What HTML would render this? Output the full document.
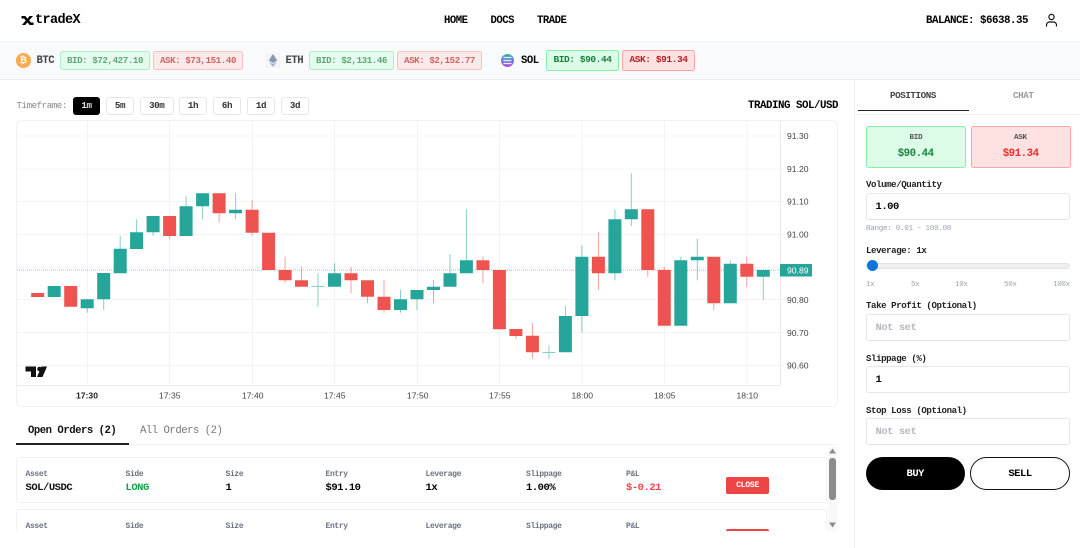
<!DOCTYPE html>
<html><head><meta charset="utf-8"><style>
html,body{margin:0;padding:0;width:1080px;height:548px;overflow:hidden;background:#fff}
body{position:relative;font-family:"Liberation Mono",monospace;color:#000}
.t{position:absolute;white-space:nowrap;line-height:20px;height:20px;margin-top:1px}
.t,.pill,.tf,.ls{letter-spacing:-.0444em}
.b{font-weight:700}
.box{position:absolute;box-sizing:border-box}
.bid{background:#dcfce7;border:1px solid #86efac;border-radius:2.5px;color:#15803d}
.ask{background:#fee2e2;border:1px solid #fca5a5;border-radius:2.5px;color:#b91c1c}
.pill{position:absolute;box-sizing:border-box;font-weight:700;white-space:nowrap;text-align:center}
.tf{position:absolute;top:97px;height:17.5px;box-sizing:border-box;border:1px solid #e5e7eb;border-radius:3px;font-size:9.2px;font-weight:700;line-height:16.5px;text-align:center;color:#333;background:#fff}
.lb{font-size:9.07px;font-weight:700;color:#222}
.in{position:absolute;left:866px;width:204px;height:27px;box-sizing:border-box;border:1px solid #e5e7eb;border-radius:3px;background:#fff}
.v{font-size:10.5px;font-weight:700}
.h{font-size:8px;font-weight:700;color:#6b7280}
.tick{font-size:7.56px;color:#9ca3af}
</style></head><body>
<!-- header -->
<svg class="box" style="left:21px;top:15px" width="13" height="11" viewBox="0 0 13 11"><path d="M1 1h3.2l2.3 2.6L8.6 1H12L8.2 5.4 12 10H8.7L6.4 7.4 4.2 10H1l3.8-4.5z" fill="#000"/><path d="M0.5 1h3v2.5h-3zM9.5 7.500h3V10h-3z" fill="#000"/></svg>
<div class="t b" style="left:35px;top:10px;font-size:13.5px">tradeX</div>
<div class="t b" style="left:444px;top:10px;font-size:10.6px">HOME</div>
<div class="t b" style="left:490.500px;top:10px;font-size:10.6px">DOCS</div>
<div class="t b" style="left:537px;top:10px;font-size:10.6px">TRADE</div>
<div class="t b" style="left:926px;top:10px;font-size:10.8px">BALANCE: $6638.35</div>
<svg class="box" style="left:1044px;top:13px" width="15" height="15" viewBox="0 0 15 15" fill="none" stroke="#111" stroke-width="1.200"><circle cx="7.500" cy="4" r="2.600"/><path d="M2.500 13.500v-1.500a3 3 0 0 1 3-3h4a3 3 0 0 1 3 3v1.500"/></svg>
<div class="box" style="left:0;top:41px;width:1080px;height:39px;background:#f9fafb;border-top:1px solid #f3f4f6;border-bottom:1px solid #e9ebef"></div>

<!-- ticker -->
<div class="box" style="left:16px;top:53px;width:14.500px;height:14.500px;border-radius:50%;background:#f9ac55;color:#fff;font:700 9px/14.500px 'Liberation Sans',sans-serif;text-align:center">₿</div>
<div class="t b" style="left:36.500px;top:50px;font-size:10.6px;color:#444">BTC</div>
<div class="pill bid" style="left:60px;top:51px;width:90px;height:19px;font-size:9.13px;line-height:17.5px;opacity:.68">BID: $72,427.10</div>
<div class="pill ask" style="left:153px;top:51px;width:90px;height:19px;font-size:9.13px;line-height:17.5px;opacity:.68">ASK: $73,151.40</div>
<svg class="box" style="left:266px;top:53px" width="14" height="15" viewBox="0 0 14 15"><rect width="14" height="15" fill="#f3f4f6"/><path d="M7 1L11.200 7.500 7 10 2.800 7.500z" fill="#8796b3"/><path d="M7 11L11 8.600 7 14 3 8.600z" fill="#a3b0c8"/></svg>
<div class="t b" style="left:285.500px;top:50px;font-size:10.6px;color:#444">ETH</div>
<div class="pill bid" style="left:309px;top:51px;width:85px;height:19px;font-size:9.13px;line-height:17.5px;opacity:.68">BID: $2,131.46</div>
<div class="pill ask" style="left:397px;top:51px;width:85px;height:19px;font-size:9.13px;line-height:17.5px;opacity:.68">ASK: $2,152.77</div>
<svg class="box" style="left:500px;top:53px" width="15" height="15" viewBox="0 0 15 15"><defs><linearGradient id="g" x1="0" y1="0" x2="0" y2="1"><stop offset="0" stop-color="#2fb5a5"/><stop offset=".5" stop-color="#6b7fd8"/><stop offset="1" stop-color="#b84be8"/></linearGradient></defs><circle cx="7.500" cy="7.500" r="6.500" fill="url(#g)"/><path d="M3.500 4.500h8M3.500 7.500h8M3.500 10.500h8" stroke="#e8eef8" stroke-width="1.300"/></svg>
<div class="t b" style="left:521px;top:50px;font-size:10.6px">SOL</div>
<div class="pill bid" style="left:546px;top:50px;width:73px;height:20.500px;font-size:9.5px;line-height:18.500px">BID: $90.44</div>
<div class="pill ask" style="left:622px;top:50px;width:73px;height:20.500px;font-size:9.5px;line-height:18.500px">ASK: $91.34</div>

<!-- timeframe -->
<div class="t" style="left:16.500px;top:95px;font-size:9.07px;color:#888">Timeframe:</div>
<div class="tf" style="left:73px;width:27px;background:#000;border-color:#000;color:#ddd">1m</div>
<div class="tf" style="left:106px;width:28px">5m</div>
<div class="tf" style="left:140px;width:33.500px">30m</div>
<div class="tf" style="left:179px;width:28px">1h</div>
<div class="tf" style="left:213px;width:28px">6h</div>
<div class="tf" style="left:247px;width:28px">1d</div>
<div class="tf" style="left:281px;width:28px">3d</div>
<div class="t b" style="left:748px;top:95px;font-size:10.8px">TRADING SOL/USD</div>

<!-- chart -->
<div class="box" style="left:16px;top:120px;width:822px;height:287px;border:1px solid #f0f1f3;border-radius:6px"></div>
<svg class="box" style="left:0;top:0" width="860" height="420" viewBox="0 0 860 420">
<path d="M17 136H784M17 169H784M17 201.500H784M17 234.500H784M17 267.500H784M17 299.500H784M17 332.500H784M17 365.500H784" stroke="#f3f4f6" stroke-width="1"/>
<path d="M87.500 121V385M169.500 121V385M252.500 121V385M334.500 121V385M417.500 121V385M499.500 121V385M582 121V385M664.500 121V385M747 121V385" stroke="#f1f3f5" stroke-width="1"/>
<path d="M780.500 121V386M17 385.500H781" stroke="#e9ebef" stroke-width="1"/>
<path d="M17 270H780" stroke="#26a69a" stroke-width="2" stroke-dasharray="1 1" opacity=".28"/>
<g fill="none">
<path stroke="#26a69a" stroke-opacity=".55" stroke-width="1" d="M87.200 299V312.700M103.700 299V310M120.200 235.700V249M136.600 219.300V233M153.100 230V235.700M186.100 196.300V207M202.600 205V219.300M235.600 193.300V219.300M318 273.300V306.700M311.500 286.500h13M334.500 263.300V274M400.500 290V312.700M417 298V310M433.500 280V303.300M450 254V274M466.400 209.300V261M548.900 345.700V358.700M542.400 352.500h13M565.400 306V317M581.900 245.300V332.700M614.900 209.300V280.300M631.300 173.300V226M680.800 256.700V261M697.300 239V280.300M730.300 260.300V264M763.300 270V300"/>
<path stroke="#ef5350" stroke-opacity=".55" stroke-width="1" d="M169.600 236V239.300M219.100 213V222.700M252.100 200V236M285.100 256.700V283.300M301.500 266.700V281M351 266.700V293.300M367.500 296V303.300M384 280V312.700M482.900 256.700V283.300M515.900 336V339M532.400 322.700V358.700M598.400 232.300V290M647.800 270V276.700M664.300 266.700V271M713.800 303V310M746.800 256.700V286.700"/>
<path stroke="#26a69a" stroke-width="13" d="M54.200 286V297M87.200 299.300V308.300M103.700 273V299.300M120.200 248.700V273.300M136.600 232.300V249M153.100 216V232.300M186.100 206.300V236M202.600 193.300V206.300M235.600 209.700V213.300M334.500 273.300V286.700M400.500 299.300V310M417 290V299.300M433.500 286.700V290M450 273.300V286.700M466.400 260.300V273.300M565.400 316V352.300M581.900 256.700V316M614.900 219.300V273.300M631.300 209.300V219.300M680.800 260.300V325.700M697.300 256.700V260.300M730.300 263.700V303.300M763.300 270V276.700"/>
<path stroke="#ef5350" stroke-width="13" d="M37.700 293V297M70.700 286V306.700M169.600 216V236M219.100 193.300V213.300M252.100 209.700V232.700M268.600 232.700V270M285.100 270V280.300M301.500 280.300V286.700M351 273.300V280.300M367.500 280.300V296.700M384 296.700V310M482.900 260.300V270M499.400 270V329.300M515.900 329V336M532.400 335.700V352.300M598.400 256.700V273.300M647.800 209.300V270M664.300 270V325.700M713.800 256.700V303.300M746.800 263.700V276.700"/>
</g>
<path d="M25.500 366.500H36V377H31V371.500H25.500Z" fill="#111"/><circle cx="39.500" cy="369" r="2.300" fill="#111"/><path d="M47 366.500L42.500 377H37L41.500 366.500Z" fill="#111"/>
<rect x="780" y="264" width="32" height="12.500" fill="#26a69a"/>
<g font-family="'Liberation Sans',sans-serif" font-size="8.600" fill="#444">
<text x="787" y="139">91.30</text><text x="787" y="172">91.20</text><text x="787" y="204.500">91.10</text><text x="787" y="237.500">91.00</text><text x="787" y="303">90.80</text><text x="787" y="336">90.70</text><text x="787" y="368.500">90.60</text>
<text x="787" y="273.500" fill="#fff">90.89</text>
<text x="76" y="398.500" font-weight="700" fill="#222">17:30</text><text x="159" y="398.500">17:35</text><text x="242" y="398.500">17:40</text><text x="324" y="398.500">17:45</text><text x="407" y="398.500">17:50</text><text x="489" y="398.500">17:55</text><text x="571.500" y="398.500">18:00</text><text x="654" y="398.500">18:05</text><text x="736.500" y="398.500">18:10</text>
</g>
</svg>

<!-- order tabs -->
<div class="t b" style="left:28px;top:420px;font-size:10.6px;color:#111">Open Orders (2)</div>
<div class="t" style="left:140px;top:420px;font-size:10.6px;color:#777">All Orders (2)</div>
<div class="box" style="left:16px;top:444px;width:821px;height:1px;background:#f1f2f4"></div>
<div class="box" style="left:16px;top:443px;width:113px;height:1.500px;background:#222"></div>

<!-- orders list -->
<div class="box" style="left:16px;top:447px;width:821px;height:84px;overflow:hidden">
 <div class="box" style="left:812px;top:0;width:9px;height:84px;background:#f8f8f8"></div>
 <div class="box" style="left:0;top:9.500px;width:811px;height:46.500px;border:1px solid #f0f1f3;border-radius:3px"></div>
 <div class="box" style="left:0;top:62px;width:811px;height:46px;border:1px solid #f0f1f3;border-radius:3px"></div>
 <div class="t h" style="left:9.500px;top:16.500px">Asset</div><div class="t h" style="left:109.500px;top:16.500px">Side</div><div class="t h" style="left:209.500px;top:16.500px">Size</div><div class="t h" style="left:309.500px;top:16.500px">Entry</div><div class="t h" style="left:409.500px;top:16.500px">Leverage</div><div class="t h" style="left:510px;top:16.500px">Slippage</div><div class="t h" style="left:610px;top:16.500px">P&amp;L</div>
 <div class="t v" style="left:9.500px;top:30px;color:#111">SOL/USDC</div><div class="t v" style="left:109.500px;top:30px;color:#15a34a">LONG</div><div class="t v" style="left:209.500px;top:30px">1</div><div class="t v" style="left:309.500px;top:30px">$91.10</div><div class="t v" style="left:409.500px;top:30px">1x</div><div class="t v" style="left:510px;top:30px">1.00%</div><div class="t v" style="left:610px;top:30px;color:#ef4444">$-0.21</div>
 <div class="box ls" style="left:710px;top:30px;width:43px;height:17px;background:#ef4444;border-radius:2px;color:#fff;font:700 8.2px/18px 'Liberation Mono',monospace;text-align:center">CLOSE</div>
 <div class="t h" style="left:9.500px;top:68.500px">Asset</div><div class="t h" style="left:109.500px;top:68.500px">Side</div><div class="t h" style="left:209.500px;top:68.500px">Size</div><div class="t h" style="left:309.500px;top:68.500px">Entry</div><div class="t h" style="left:409.500px;top:68.500px">Leverage</div><div class="t h" style="left:510px;top:68.500px">Slippage</div><div class="t h" style="left:610px;top:68.500px">P&amp;L</div>
 <div class="box" style="left:710px;top:82px;width:43px;height:17px;background:#ef4444;border-radius:2px"></div>
 <div class="box" style="left:813px;top:11px;width:6.500px;height:42px;background:#8c8c8c;border-radius:3px"></div>
 <svg class="box" style="left:812px;top:0" width="9" height="84"><path d="M1 7.500L4.500 2.500 8 7.500zM1 76.500L4.500 81.500 8 76.500z" fill="#8c8c8c" transform="translate(0,-1)"/></svg>
</div>

<!-- right panel -->
<div class="box" style="left:854px;top:80px;width:1px;height:468px;background:#eff0f2"></div>
<div class="t b" style="left:890px;top:85px;font-size:9.2px;color:#444">POSITIONS</div>
<div class="t b" style="left:1013px;top:85px;font-size:9.2px;color:#999">CHAT</div>
<div class="box" style="left:855px;top:114px;width:225px;height:1px;background:#eff0f2"></div>
<div class="box" style="left:858px;top:110px;width:110.500px;height:1px;background:#222"></div>
<div class="box bid" style="left:866px;top:126px;width:99.500px;height:41.500px"></div>
<div class="box ask" style="left:971px;top:126px;width:99.500px;height:41.500px"></div>
<div class="t" style="left:909.500px;top:127px;font-size:7.67px;color:#555;font-weight:700">BID</div>
<div class="t" style="left:1014px;top:127px;font-size:7.67px;color:#555;font-weight:700">ASK</div>
<div class="t b" style="left:897.700px;top:143px;font-size:10.8px;color:#16883f">$90.44</div>
<div class="t b" style="left:1002.700px;top:143px;font-size:10.8px;color:#ef2d2d">$91.34</div>
<div class="t lb" style="left:866px;top:174px">Volume/Quantity</div>
<div class="in" style="top:193px"></div>
<div class="t v" style="left:875.500px;top:196px">1.00</div>
<div class="t" style="left:866px;top:217.500px;font-size:7.67px;color:#9ca3af">Range: 0.01 - 100.00</div>
<div class="t lb" style="left:866px;top:240px">Leverage: 1x</div>
<div class="box" style="left:866px;top:262.500px;width:204px;height:6px;background:#efefef;border:1px solid #dfe1e4;border-radius:3px"></div>
<div class="box" style="left:866.500px;top:260px;width:11px;height:11px;background:#0b75d9;border-radius:50%"></div>
<div class="t tick" style="left:866px;top:273.500px">1x</div><div class="t tick" style="left:911px;top:273.500px">5x</div><div class="t tick" style="left:955px;top:273.500px">10x</div><div class="t tick" style="left:1004px;top:273.500px">50x</div><div class="t tick" style="left:1053px;top:273.500px">100x</div>
<div class="t lb" style="left:866px;top:295px">Take Profit (Optional)</div>
<div class="in" style="top:314px"></div>
<div class="t v" style="left:875.500px;top:317px;color:#b4b8bf">Not set</div>
<div class="t lb" style="left:866px;top:347.500px">Slippage (%)</div>
<div class="in" style="top:366px"></div>
<div class="t v" style="left:875.500px;top:369px">1</div>
<div class="t lb" style="left:866px;top:399.500px">Stop Loss (Optional)</div>
<div class="in" style="top:418px"></div>
<div class="t v" style="left:875.500px;top:421px;color:#b4b8bf">Not set</div>
<div class="box ls" style="left:866px;top:456.500px;width:98.500px;height:33.500px;background:#000;border-radius:17px;color:#fff;font:700 10.5px/35.500px 'Liberation Mono',monospace;text-align:center">BUY</div>
<div class="box ls" style="left:970px;top:456.500px;width:100px;height:33.500px;background:#fff;border:1px solid #111;border-radius:17px;font:700 10.5px/33.500px 'Liberation Mono',monospace;text-align:center">SELL</div>
</body></html>
